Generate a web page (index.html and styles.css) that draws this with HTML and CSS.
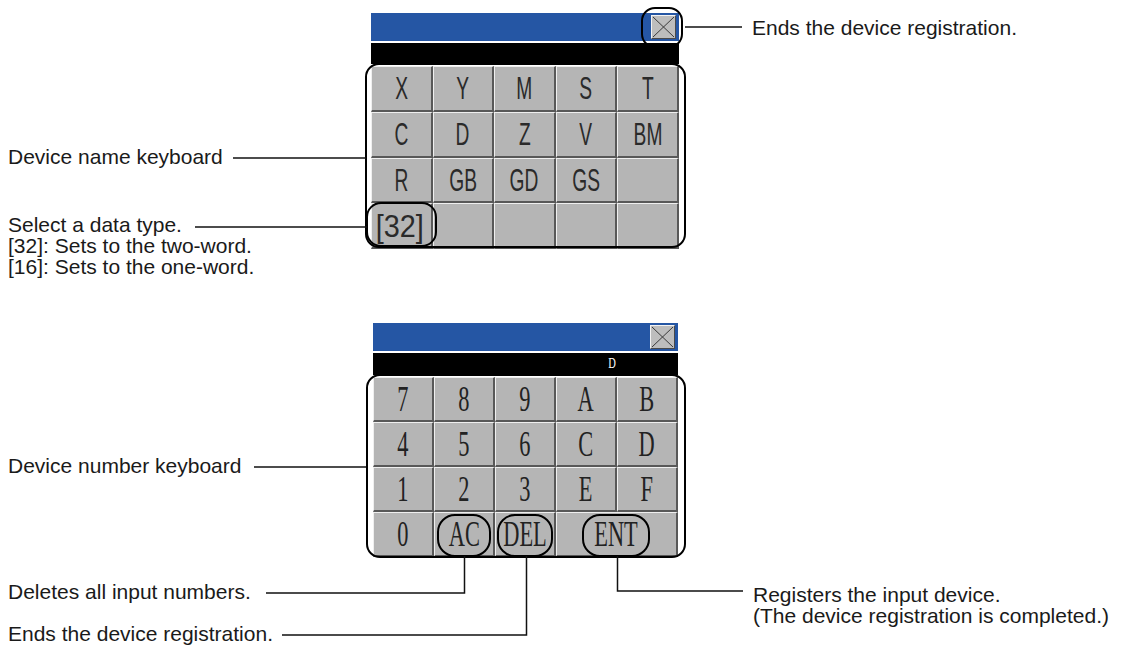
FILE: index.html
```html
<!DOCTYPE html>
<html lang="en">
<head>
<meta charset="utf-8">
<title>Device registration keyboards</title>
<link rel="stylesheet" href="styles.css">
</head>
<body>
<div class="page">
  <section class="fig fig-name">
    <div class="panel panel-name">
      <div class="titlebar">
        <span class="close"><svg viewBox="0 0 23 22" width="23" height="22"><path d="M1 1 L22 21 M22 1 L1 21" stroke="#3a3a3a" stroke-width="1" fill="none"/></svg></span>
      </div>
      <div class="inputbar"></div>
      <div class="keys keys-name">
        <div class="key"><span>X</span></div>
        <div class="key"><span>Y</span></div>
        <div class="key"><span>M</span></div>
        <div class="key"><span>S</span></div>
        <div class="key"><span>T</span></div>
        <div class="key"><span>C</span></div>
        <div class="key"><span>D</span></div>
        <div class="key"><span>Z</span></div>
        <div class="key"><span>V</span></div>
        <div class="key"><span>BM</span></div>
        <div class="key"><span>R</span></div>
        <div class="key"><span>GB</span></div>
        <div class="key"><span>GD</span></div>
        <div class="key"><span>GS</span></div>
        <div class="key"></div>
        <div class="key key-type"><span>[32]</span></div>
        <div class="key"></div>
        <div class="key"></div>
        <div class="key"></div>
        <div class="key"></div>
      </div>
      <span class="ring ring-keys-name"></span>
      <span class="ring ring-close"></span>
      <span class="ring ring-type"></span>
    </div>
    <p class="note note-close">Ends the device registration.</p>
    <p class="note note-name">Device name keyboard</p>
    <p class="note note-type">Select a data type.<br>[32]: Sets to the two-word.<br>[16]: Sets to the one-word.</p>
  </section>

  <section class="fig fig-number">
    <div class="panel panel-number">
      <div class="titlebar">
        <span class="close"><svg viewBox="0 0 23 22" width="23" height="22"><path d="M1 1 L22 21 M22 1 L1 21" stroke="#3a3a3a" stroke-width="1" fill="none"/></svg></span>
      </div>
      <div class="inputbar"><span class="readout">D</span></div>
      <div class="keys keys-number">
        <div class="key"><span>7</span></div>
        <div class="key"><span>8</span></div>
        <div class="key"><span>9</span></div>
        <div class="key"><span>A</span></div>
        <div class="key"><span>B</span></div>
        <div class="key"><span>4</span></div>
        <div class="key"><span>5</span></div>
        <div class="key"><span>6</span></div>
        <div class="key"><span>C</span></div>
        <div class="key"><span>D</span></div>
        <div class="key"><span>1</span></div>
        <div class="key"><span>2</span></div>
        <div class="key"><span>3</span></div>
        <div class="key"><span>E</span></div>
        <div class="key"><span>F</span></div>
        <div class="key"><span>0</span></div>
        <div class="key"><span>AC</span></div>
        <div class="key"><span>DEL</span></div>
        <div class="key key-wide"><span>ENT</span></div>
      </div>
      <span class="ring ring-keys-number"></span>
      <span class="ring ring-ac"></span>
      <span class="ring ring-del"></span>
      <span class="ring ring-ent"></span>
    </div>
    <p class="note note-number">Device number keyboard</p>
    <p class="note note-ac">Deletes all input numbers.</p>
    <p class="note note-del">Ends the device registration.</p>
    <p class="note note-ent">Registers the input device.<br>(The device registration is completed.)</p>
  </section>

  <svg class="leaders" width="1123" height="650" viewBox="0 0 1123 650">
    <g stroke="#111" stroke-width="1.5" fill="none">
      <path d="M685 27 H742"/>
      <path d="M233 158 H366"/>
      <path d="M195 227 H367"/>
      <path d="M254 467 H366"/>
      <path d="M266 593 H464.5 V556"/>
      <path d="M282 635 H526.5 V556"/>
      <path d="M617.5 556 V591 H743"/>
    </g>
  </svg>
</div>
</body>
</html>
```

FILE: styles.css
```css
* { box-sizing: border-box; }

html, body {
  margin: 0;
  padding: 0;
  background: #ffffff;
}

.page {
  position: relative;
  width: 1123px;
  height: 650px;
  overflow: hidden;
  font-family: "Liberation Sans", Arial, sans-serif;
  color: #1a1a1a;
}

.fig {
  position: relative;
}

.fig-name {
  height: 309px;
  padding-top: 13px;
}

.fig-number {
  height: 341px;
  padding-top: 14px;
}

.panel {
  position: relative;
}

.panel-name {
  margin-left: 371px;
  width: 308px;
}

.panel-number {
  margin-left: 373px;
  width: 305px;
}

.titlebar {
  height: 28px;
  background: #2556a4;
  display: flex;
  justify-content: flex-end;
  align-items: center;
  padding-right: 3px;
}

.close {
  width: 25px;
  height: 24px;
  background: #bdbdbd;
  border-top: 1px solid #f2f2f2;
  border-left: 1px solid #f2f2f2;
  border-right: 1px solid #4a4a4a;
  border-bottom: 1px solid #4a4a4a;
  display: flex;
}

.close svg {
  display: block;
}

.inputbar {
  margin-top: 2px;
  height: 21px;
  background: #000;
  display: flex;
  align-items: center;
}

.panel-number .inputbar {
  height: 22px;
  padding-left: 234px;
}

.readout {
  color: #fff;
  font-family: "Liberation Serif", "Times New Roman", serif;
  font-size: 14px;
  display: inline-block;
  transform: scaleX(0.75);
}

.keys {
  margin-top: 2px;
  display: grid;
  grid-template-columns: repeat(5, 1fr);
  background: #b5b5b5;
}

.keys-name {
  grid-template-rows: repeat(4, 45.75px);
}

.keys-number {
  grid-template-rows: repeat(4, 45px);
}

.key {
  background: #b5b5b5;
  border-top: 1px solid #efefef;
  border-left: 1px solid #efefef;
  border-right: 2px solid #585858;
  border-bottom: 2px solid #585858;
  display: flex;
  align-items: center;
  justify-content: center;
  overflow: hidden;
}

.key span {
  display: inline-block;
  line-height: 1;
}

.keys-name .key span {
  font-family: "Liberation Sans", Arial, sans-serif;
  font-size: 32px;
  color: #2a2a2a;
  transform: scaleX(0.6);
}

.keys-name .key-type span {
  transform: scaleX(0.9);
  margin-left: -4px;
}

.keys-number .key span {
  font-family: "Liberation Serif", "Times New Roman", serif;
  font-size: 35px;
  color: #222;
  transform: scaleX(0.64);
}

.key-wide {
  grid-column: span 2;
}

.ring {
  position: absolute;
  border: 2px solid #000;
  pointer-events: none;
}

.ring-keys-name {
  left: -6px;
  top: 50px;
  width: 321px;
  height: 185px;
  border-radius: 14px;
}

.ring-close {
  left: 270px;
  top: -6px;
  width: 42px;
  height: 41px;
  border-radius: 14px;
}

.ring-type {
  left: -5px;
  top: 189px;
  width: 71px;
  height: 45px;
  border-radius: 15px;
}

.ring-keys-number {
  left: -7px;
  top: 51px;
  width: 320px;
  height: 184px;
  border-radius: 14px;
}

.ring-ac {
  left: 64px;
  top: 191px;
  width: 54px;
  height: 43px;
  border-radius: 18px;
}

.ring-del {
  left: 124px;
  top: 191px;
  width: 56px;
  height: 43px;
  border-radius: 18px;
}

.ring-ent {
  left: 209px;
  top: 191px;
  width: 68px;
  height: 43px;
  border-radius: 18px;
}

.note {
  position: absolute;
  margin: 0;
  font-size: 21px;
  line-height: 21px;
  white-space: nowrap;
}

.note-close { left: 752px; top: 17px; }
.note-name { left: 8px; top: 146px; }
.note-type { left: 8px; top: 214px; }

.note-number { left: 8px; top: 146px; }
.note-ac { left: 8px; top: 272px; }
.note-del { left: 8px; top: 314px; }
.note-ent { left: 753px; top: 275px; }

.leaders {
  position: absolute;
  left: 0;
  top: 0;
  pointer-events: none;
}
```
